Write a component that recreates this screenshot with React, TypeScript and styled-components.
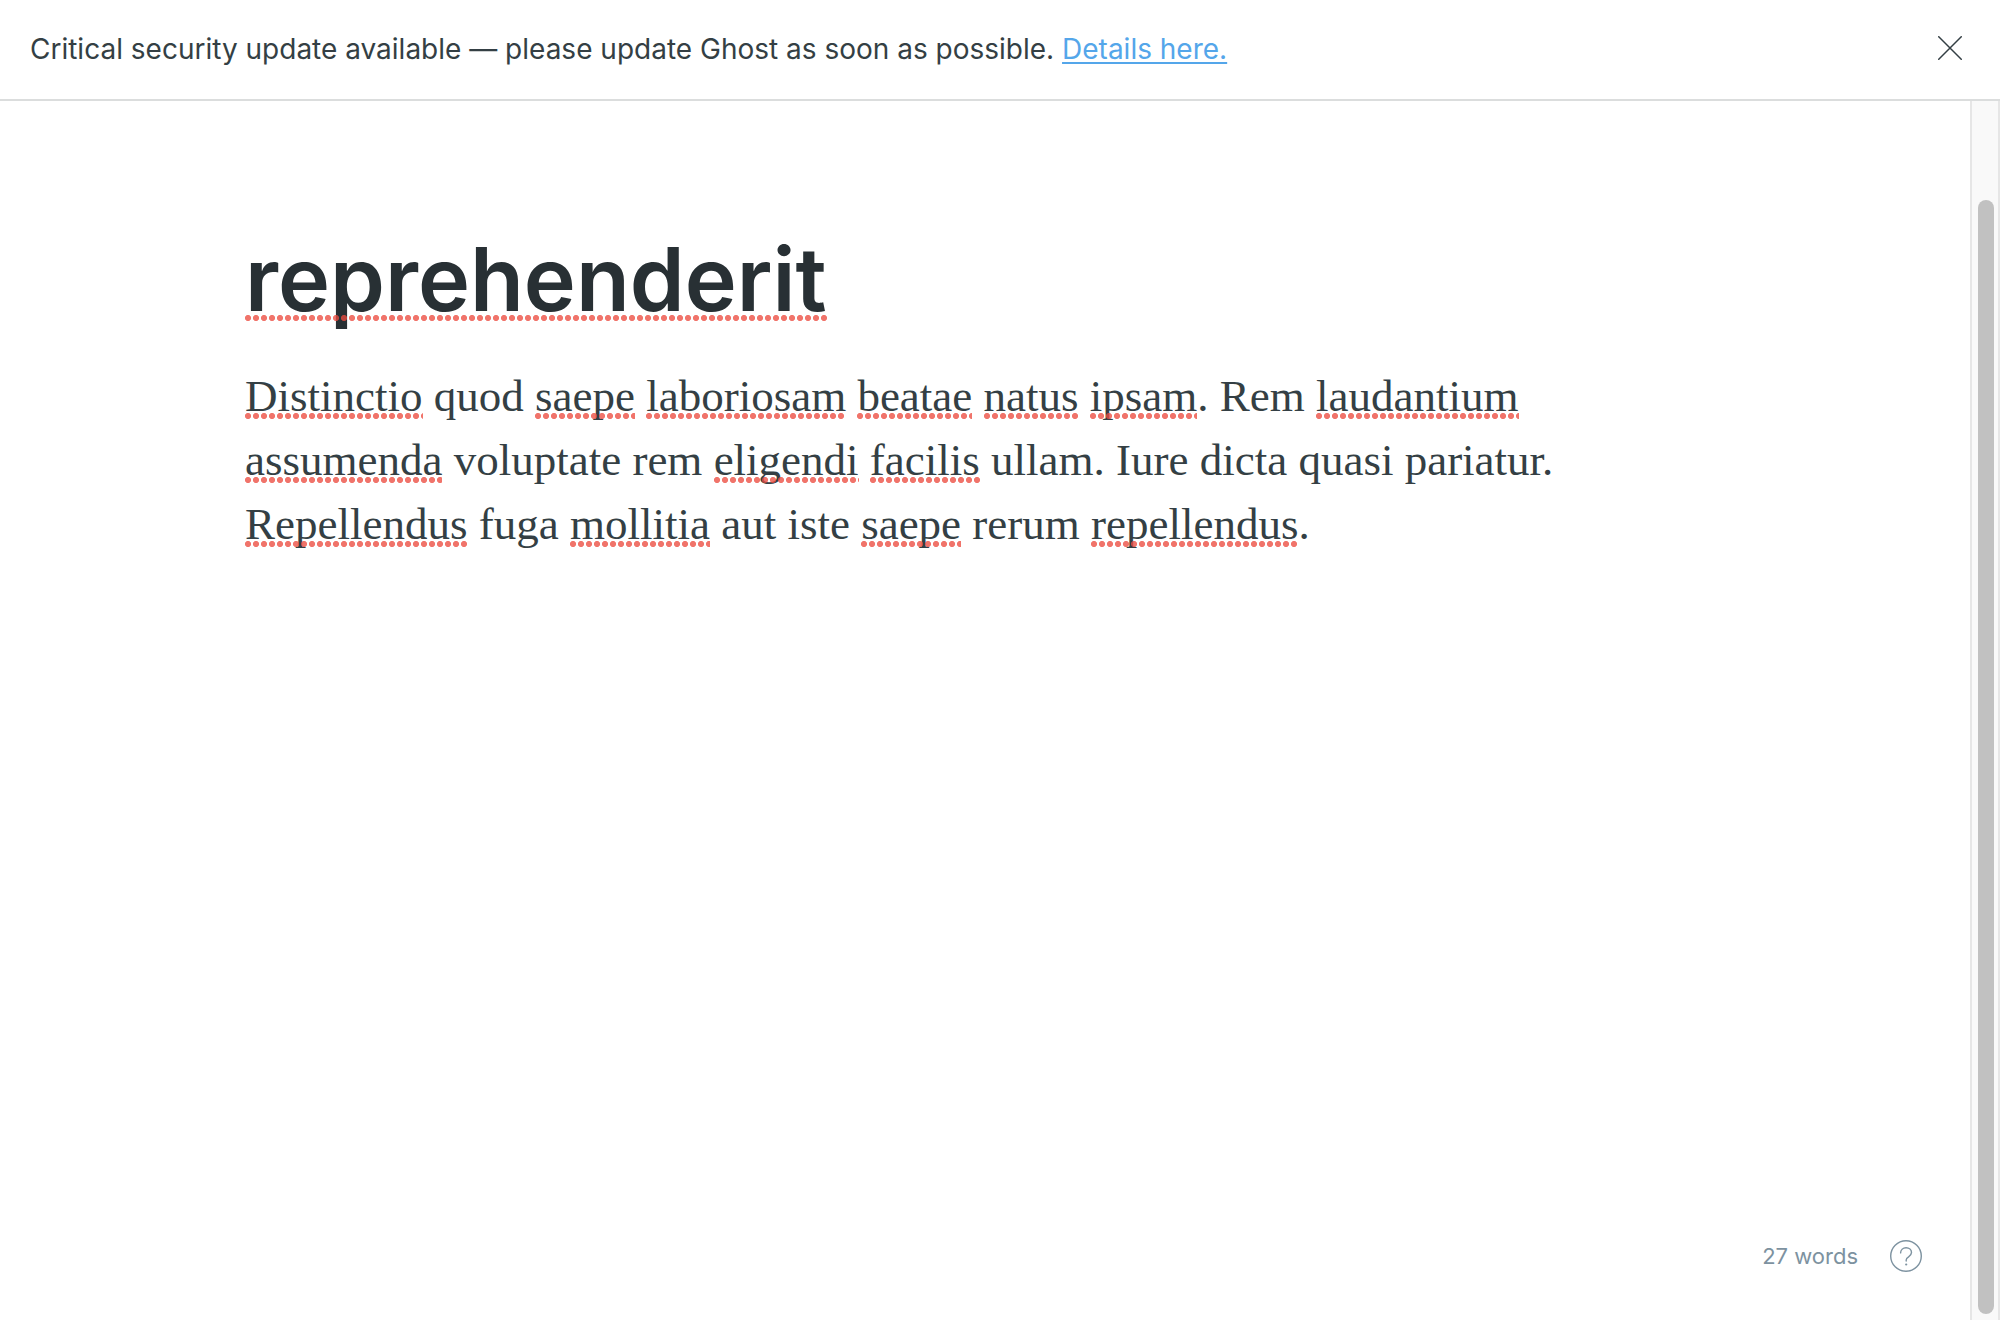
import React from 'react';
import styled, { createGlobalStyle } from 'styled-components';

const GlobalStyle = createGlobalStyle`
  *, *::before, *::after { box-sizing: border-box; }
  body {
    margin: 0;
    background: #fff;
    color: #343f44;
    font-family: Inter, "Liberation Sans", sans-serif;
  }
`;

const Page = styled.div`
  display: flex;
  flex-direction: column;
  min-height: 100vh;
`;

const Alert = styled.header`
  display: flex;
  align-items: flex-start;
  justify-content: space-between;
  padding: 24px 30px;
  border-bottom: 2px solid #dbdddd;
  font-size: 28px;
  line-height: 51px;
`;

const AlertText = styled.p`
  margin: 0;
`;

const AlertLink = styled.a`
  color: #54a6ea;
  text-decoration: underline;
  text-decoration-thickness: 2px;
  text-underline-offset: 3px;
`;

const IconButton = styled.button<{ $tone: string }>`
  display: flex;
  align-items: center;
  justify-content: center;
  width: 40px;
  height: 48px;
  padding: 0;
  border: 0;
  background: none;
  color: ${(p) => p.$tone};
  cursor: pointer;
`;

const Workspace = styled.div`
  flex: 1;
  display: flex;
`;

const Editor = styled.main`
  flex: 1;
  min-width: 0;
  display: flex;
  flex-direction: column;
  justify-content: space-between;
  padding: 123px 44px 40px;
`;

const Article = styled.article`
  width: 100%;
  max-width: 1480px;
  margin: 0 auto;
`;

const Title = styled.h1`
  margin: 0 0 30px;
  color: #283034;
  font-size: 88px;
  font-weight: 600;
  line-height: 110px;
`;

const Body = styled.p`
  margin: 0;
  font-family: "Liberation Serif", serif;
  font-size: 45px;
  line-height: 64px;
`;

const Misspelled = styled.span<{ $rise: number }>`
  position: relative;
  display: inline-block;

  &::after {
    content: "";
    position: absolute;
    left: 0;
    right: 0;
    bottom: ${(p) => p.$rise}px;
    height: 6px;
    background: radial-gradient(circle at 3px 3px, #ec4a3ec4 2.7px, transparent 3.4px) 0 0 / 8px 6px repeat-x;
  }
`;

const Status = styled.footer`
  display: flex;
  align-items: center;
  justify-content: flex-end;
  gap: 28px;
  color: #7d92a0;
  font-size: 22px;
  line-height: 32px;
`;

const Track = styled.div`
  display: flex;
  width: 30px;
  padding: 99px 4px 6px 6px;
  border: solid #e6e6e6;
  border-width: 0 2px;
  background: #f9f9f9;
`;

const Thumb = styled.div`
  flex: 1;
  border-radius: 8px;
  background: #c1c1c1;
`;

type Word = { text: string; flagged?: boolean; tail?: string };

const content: Word[] = [
  { text: 'Distinctio', flagged: true },
  { text: 'quod' },
  { text: 'saepe', flagged: true },
  { text: 'laboriosam', flagged: true },
  { text: 'beatae', flagged: true },
  { text: 'natus', flagged: true },
  { text: 'ipsam', flagged: true, tail: '.' },
  { text: 'Rem' },
  { text: 'laudantium', flagged: true },
  { text: 'assumenda', flagged: true },
  { text: 'voluptate rem' },
  { text: 'eligendi', flagged: true },
  { text: 'facilis', flagged: true },
  { text: 'ullam. Iure dicta quasi pariatur.' },
  { text: 'Repellendus', flagged: true },
  { text: 'fuga' },
  { text: 'mollitia', flagged: true },
  { text: 'aut iste' },
  { text: 'saepe', flagged: true },
  { text: 'rerum' },
  { text: 'repellendus', flagged: true, tail: '.' },
];

export default function App() {
  return (
    <Page>
      <GlobalStyle />
      <Alert>
        <AlertText>
          Critical security update available — please update Ghost as soon as possible.{' '}
          <AlertLink href="#details">Details here.</AlertLink>
        </AlertText>
        <IconButton type="button" aria-label="Close" $tone="#343f44">
          <svg width="24" height="24" viewBox="0 0 24 24" fill="none" stroke="currentColor" strokeWidth="1.5" strokeLinecap="round">
            <path d="M.75.75l22.5 22.5M23.25.75L.75 23.25" />
          </svg>
        </IconButton>
      </Alert>
      <Workspace>
        <Editor>
          <Article>
            <Title>
              <Misspelled $rise={13}>reprehenderit</Misspelled>
            </Title>
            <Body>
              {content.map((word, i) => (
                <React.Fragment key={i}>
                  {word.flagged ? <Misspelled $rise={9}>{word.text}</Misspelled> : word.text}
                  {word.tail}{' '}
                </React.Fragment>
              ))}
            </Body>
          </Article>
          <Status>
            <span>27 words</span>
            <IconButton type="button" aria-label="Help" $tone="#7d92a0">
              <svg width="32" height="32" viewBox="0 0 32 32" fill="none" stroke="currentColor" strokeWidth="1.4" strokeLinecap="round" strokeLinejoin="round">
                <circle cx="16" cy="16" r="15.3" />
                <path d="M10.6 12.9c0-3 2.4-5.2 5.5-5.2 3 0 5.4 2 5.4 4.9 0 4.3-5.3 4-5.3 7.4v1" />
                <circle cx="16.2" cy="24.5" r="1.1" fill="currentColor" stroke="none" />
              </svg>
            </IconButton>
          </Status>
        </Editor>
        <Track aria-hidden="true">
          <Thumb />
        </Track>
      </Workspace>
    </Page>
  );
}
